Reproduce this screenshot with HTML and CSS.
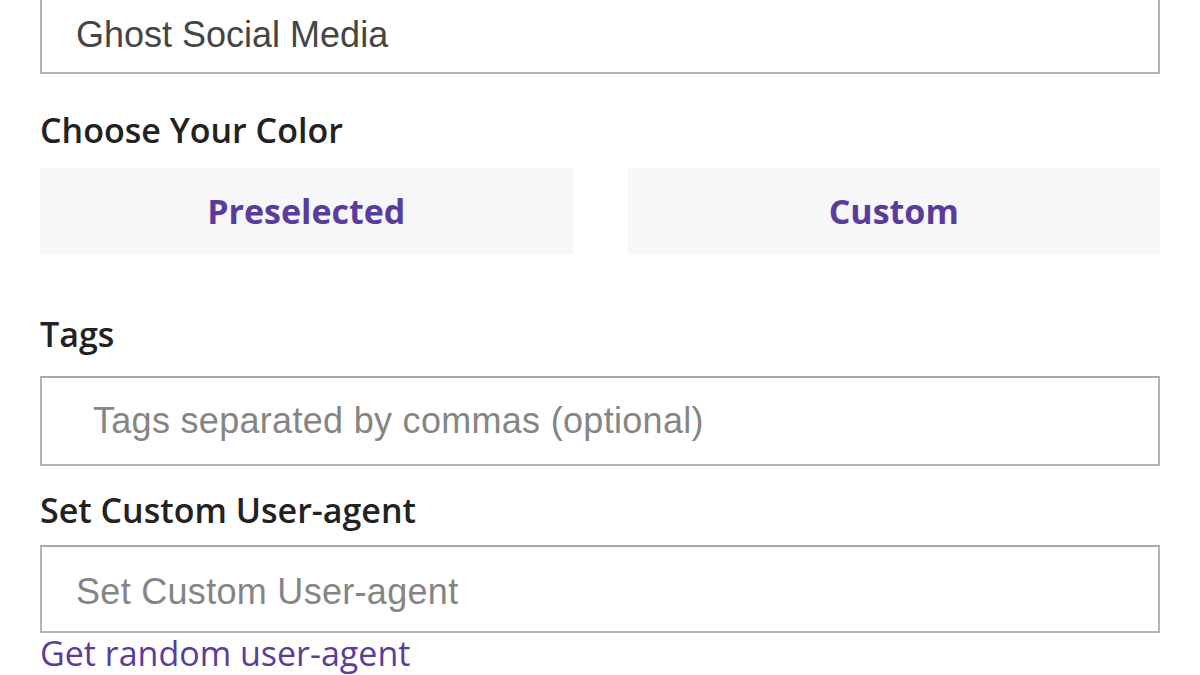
FILE: index.html
```html
<!DOCTYPE html>
<html lang="en">
<head>
    <meta charset="UTF-8">
    <meta name="viewport" content="width=device-width, initial-scale=1.0">
    <title>Profile Settings</title>
    <link rel="stylesheet" href="styles.css">
</head>
<body>
    <form class="profile-form">
        <div class="field">
            <input class="text-input name-input" type="text" value="Ghost Social Media">
        </div>

        <div class="field">
            <label class="field-label">Choose Your Color</label>
            <div class="color-choice">
                <button type="button" class="choice-btn">Preselected</button>
                <button type="button" class="choice-btn">Custom</button>
            </div>
        </div>

        <div class="field tags-field">
            <label class="field-label">Tags</label>
            <input class="text-input tags-input" type="text" placeholder="Tags separated by commas (optional)">
        </div>

        <div class="field agent-field">
            <label class="field-label">Set Custom User-agent</label>
            <input class="text-input agent-input" type="text" placeholder="Set Custom User-agent">
            <a class="random-link" href="#">Get random user-agent</a>
        </div>
    </form>
</body>
</html>
```

FILE: styles.css
```css
:root {
    --clr-purple: #5a3c9c;
    --clr-border: #b4b4b4;
}
body, html {
    background-color: #ffffff;
    margin: 0;
    padding: 0;
    height: 100%;
    overflow: hidden;
}

.profile-form {
    display: flex;
    flex-direction: column;
    padding: 0 40px;
    margin-top: -14px;
}

.field {
    display: flex;
    flex-direction: column;
}

.field-label {
    font-family: 'Open Sans', sans-serif;
    font-weight: 600;
    font-size: 34px;
    line-height: 40px;
    color: #222;
    margin-top: 36px;
    margin-bottom: 18px;
}

.tags-field .field-label {
    margin-top: 60px;
    margin-bottom: 22px;
}

.agent-field .field-label {
    margin-top: 24px;
    margin-bottom: 15px;
}

.text-input {
    box-sizing: border-box;
    width: 100%;
    height: 88px;
    border: 2px solid var(--clr-border);
    border-top-color: #a8a8a8;
    border-radius: 0;
    padding: 0 34px;
    font-family: 'Liberation Sans', Arial, sans-serif;
    font-size: 36px;
    color: #454545;
    background: #fff;
    outline: none;
}
.text-input::placeholder {
    color: #858585;
}

.name-input {
    padding-top: 10px;
}

.tags-input {
    height: 90px;
    padding-left: 51px;
    letter-spacing: 0.3px;
}

.agent-input {
    padding-top: 6px;
    letter-spacing: 0.3px;
}

.color-choice {
    display: grid;
    grid-template-columns: 1fr 1fr;
    column-gap: 55px;
}

.choice-btn {
    height: 86px;
    border: none;
    background-color: #f7f7fa;
    font-family: 'Open Sans', sans-serif;
    font-weight: 700;
    font-size: 34px;
    color: var(--clr-purple);
    cursor: pointer;
}

.random-link {
    font-family: 'Open Sans', sans-serif;
    font-size: 34px;
    line-height: 40px;
    color: var(--clr-purple);
    text-decoration: none;
}
```
